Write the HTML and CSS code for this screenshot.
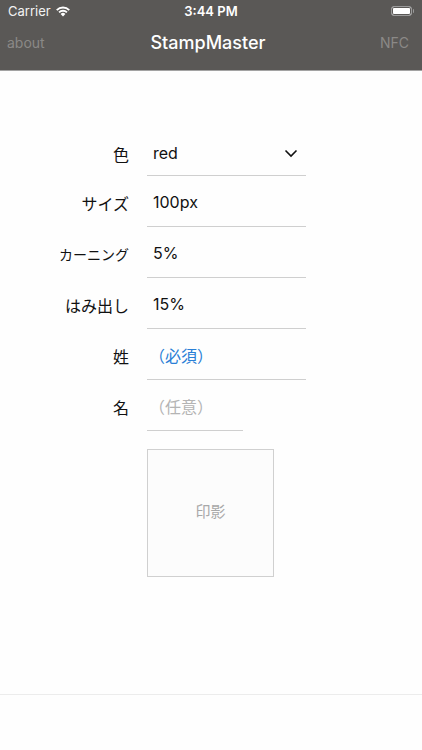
FILE: index.html
```html
<!DOCTYPE html>
<html lang="ja">
<head>
<meta charset="utf-8">
<link rel="stylesheet" href="styles.css">
</head>
<body>
<header class="bar">
  <div class="status">
    <div class="carrier">Carrier
      <svg class="wifi" width="16" height="12" viewBox="0 0 16 12"><path d="M8 11.5 L5.6 8.9 A3.4 3.4 0 0 1 10.4 8.9 Z" fill="#fff"/><path d="M3.4 6.7 A6.5 6.5 0 0 1 12.6 6.7 L11.3 8 A4.7 4.7 0 0 0 4.7 8 Z" fill="#fff"/><path d="M1.1 4.4 A9.8 9.8 0 0 1 14.9 4.4 L13.6 5.7 A8 8 0 0 0 2.4 5.7 Z" fill="#fff"/></svg>
    </div>
    <div class="time">3:44 PM</div>
    <div class="battery"><span class="cell"></span><span class="tip"></span></div>
  </div>
  <nav class="nav">
    <span class="side">about</span>
    <span class="title">StampMaster</span>
    <span class="side right">NFC</span>
  </nav>
</header>
<main class="form">
  <div class="row first"><span class="label">色</span><span class="field select">red<svg width="14" height="9" viewBox="0 0 14 9"><path d="M1.5 1.5 L7 7 L12.5 1.5" fill="none" stroke="#111" stroke-width="1.6"/></svg></span></div>
  <div class="row"><span class="label">サイズ</span><span class="field">100px</span></div>
  <div class="row"><span class="label small">カーニング</span><span class="field">5%</span></div>
  <div class="row"><span class="label">はみ出し</span><span class="field">15%</span></div>
  <div class="row"><span class="label">姓</span><span class="field blue">（必須）</span></div>
  <div class="row"><span class="label">名</span><span class="field short gray">（任意）</span></div>
  <div class="row stamp-row"><span class="label"></span><div class="stamp">印影</div></div>
</main>
<footer class="foot"></footer>
</body>
</html>
```
FILE: styles.css
```css
html, body { margin: 0; padding: 0; }
body {
  width: 422px; height: 750px; background: #fefefe; overflow: hidden;
  font-family: "Noto Sans CJK JP", "Liberation Sans", sans-serif;
  color: #111;
  display: flex; flex-direction: column;
}
.bar { background: #5a5856; border-bottom: 1px solid #a3a3a3; height: 71px; box-sizing: border-box; color: #fff; }
.status { height: 22px; display: flex; align-items: center; justify-content: space-between; padding: 0 8px; font-family: "Inter", "Liberation Sans", sans-serif; font-size: 13px; position: relative; }
.carrier { display: flex; align-items: center; gap: 4px; color: #f2f2f2; }
.time { position: absolute; left: 0; right: 0; text-align: center; font-weight: 600; pointer-events: none; }
.battery { display: flex; align-items: center; }
.cell { width: 19px; height: 8px; border: 1px solid #9a9a9a; border-radius: 3px; background: #fff; box-shadow: inset 0 0 0 1px #5a5856; }
.tip { width: 1.5px; height: 4px; background: #9a9a9a; margin-left: 1px; border-radius: 0 1px 1px 0; }
.nav { height: 40px; display: grid; grid-template-columns: 1fr auto 1fr; align-items: center; padding: 0 13px 0 7px; font-family: "Inter", "Liberation Sans", sans-serif; }
.side { font-size: 14px; color: #8b8987; }
.side.right { text-align: right; }
.title { font-size: 18px; font-weight: 500; color: #fff; }
.form { flex: 1; display: flex; flex-direction: column; padding-top: 54px; }
.row { display: flex; align-items: stretch; height: 51px; }
.label { width: 129px; text-align: right; font-size: 16px; padding-right: 18px; box-sizing: content-box; display: flex; align-items: center; justify-content: flex-end; padding-top: 2px; }
.label.small { font-size: 14px; }
.field { width: 159px; border-bottom: 1px solid #cfcfcf; box-sizing: border-box; display: flex; align-items: center; justify-content: space-between; padding: 2px 8px 0 6px; font-size: 16px; font-family: "Inter", "Liberation Sans", "Noto Sans CJK JP", sans-serif; }
.row.first .label, .row.first .field { padding-top: 6px; }
.field.short { width: 96px; }
.blue { color: #2a7fd6; font-family: "Noto Sans CJK JP", sans-serif; padding-left: 2px; }
.gray { color: #b4b4b4; font-family: "Noto Sans CJK JP", sans-serif; padding-left: 2px; }
.stamp-row { height: auto; padding-top: 18px; }
.stamp { width: 127px; height: 128px; box-sizing: border-box; border: 1px solid #d0d0d0; background: #fcfcfc; display: flex; align-items: center; justify-content: center; color: #a8a8a8; font-size: 15px; padding-bottom: 6px; }
.foot { height: 55px; border-top: 1px solid #ececec; }
```
